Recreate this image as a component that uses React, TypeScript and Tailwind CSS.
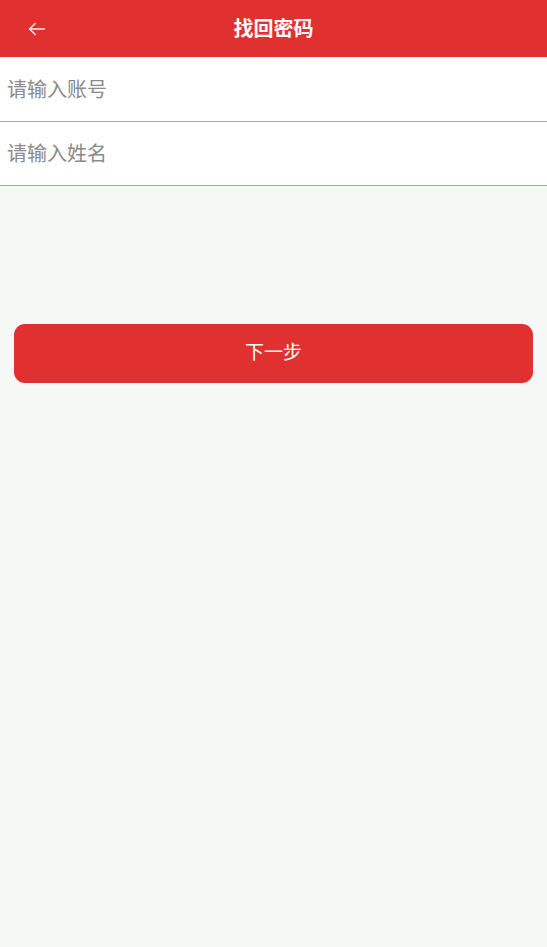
import { useState } from "react";

const font = "font-['Roboto','Noto_Sans_CJK_SC',sans-serif]";

function Field({ placeholder }: { placeholder: string }) {
  const [value, setValue] = useState("");
  return (
    <div className="h-[64px] border-b-[1.5px] border-[#a8a8a8] bg-white">
      <input
        value={value}
        onChange={(e) => setValue(e.target.value)}
        placeholder={placeholder}
        className={`h-full w-full bg-transparent px-[7px] text-[20px] text-[#333] outline-none placeholder:text-[#8a8a8a] ${font}`}
      />
    </div>
  );
}

export default function App() {
  return (
    <div className={`flex min-h-[947px] w-full flex-col bg-[#f6f8f6] ${font}`}>
      <header className="relative flex h-[57px] items-center justify-center bg-[#e03030]">
        <button className="absolute left-[22px] top-1/2 -translate-y-1/2 p-1 text-white/90">
          <svg width="22" height="22" viewBox="0 0 24 24" fill="none" stroke="currentColor" strokeWidth="1.6" strokeLinecap="round" strokeLinejoin="round">
            <path d="M20 12H4" />
            <path d="M10 6l-6 6 6 6" />
          </svg>
        </button>
        <h1 className="text-[20px] font-bold text-white">找回密码</h1>
      </header>

      <div className="mt-[1px]">
        <Field placeholder="请输入账号" />
        <Field placeholder="请输入姓名" />
      </div>

      <div className="px-[14px] pt-[138px]">
        <button className="flex h-[59px] w-full items-center justify-center rounded-[11px] bg-[#e03030] text-[19px] text-white">
          下一步
        </button>
      </div>
    </div>
  );
}
